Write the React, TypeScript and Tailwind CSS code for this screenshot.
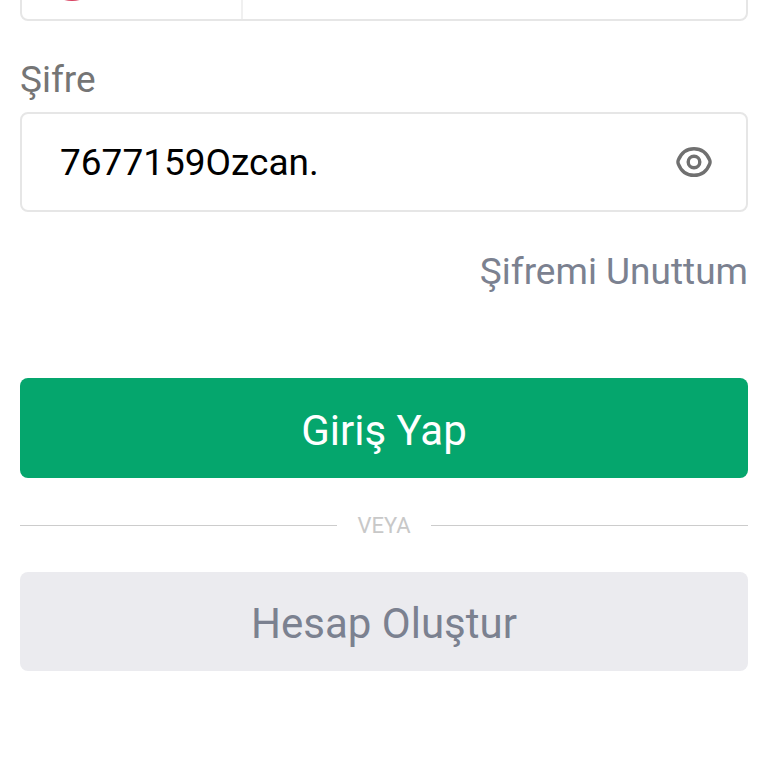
import React, { useState } from 'react';

const EyeIcon: React.FC = () => (
  <svg viewBox="0 0 36 32" className="w-9 h-8" fill="none" stroke="#707070" strokeWidth={3.4} aria-hidden="true">
    <path d="M2.300 14.200C5 7.200 10.500 2.700 18 2.700S31 7.200 33.700 14.200Q34.400 16 33.700 17.800C31 24.800 25.500 29.300 18 29.300S5 24.800 2.300 17.800Q1.600 16 2.300 14.200Z" strokeLinejoin="round" />
    <circle cx="18" cy="16" r="5.800" />
  </svg>
);

const PhoneField: React.FC = () => (
  <div className="flex h-[100px] rounded-lg border-2 border-[#e6e6e6] bg-white">
    <button type="button" aria-label="Ülke kodu" className="w-[221px] flex items-center pl-5 border-r-2 border-[#f0f0f0]">
      <svg viewBox="0 0 60 60" className="size-[60px]" aria-hidden="true">
        <circle cx="30" cy="30" r="30" fill="#d8405f" />
        <circle cx="24" cy="30" r="14" fill="#fff" />
        <circle cx="28" cy="30" r="11" fill="#d8405f" />
      </svg>
    </button>
    <input type="tel" aria-label="Telefon" className="flex-1 min-w-0 px-10 text-[37px] outline-none" />
  </div>
);

const PasswordField: React.FC = () => {
  const [password, setPassword] = useState('7677159Ozcan.');
  const [visible, setVisible] = useState(true);

  return (
    <div className="mt-[37px] flex flex-col gap-[10px]">
      <label htmlFor="password" className="text-[37px] leading-[44px] text-[#757575]">Şifre</label>
      <div className="flex items-center h-[100px] rounded-lg border-2 border-[#e6e6e6] bg-white pl-[38px] pr-[34px]">
        <input
          id="password"
          type={visible ? 'text' : 'password'}
          value={password}
          onChange={e => setPassword(e.target.value)}
          className="flex-1 min-w-0 pt-0.5 text-[37px] leading-[44px] text-black outline-none"
        />
        <button type="button" aria-label="Şifreyi göster" onClick={() => setVisible(v => !v)}>
          <EyeIcon />
        </button>
      </div>
    </div>
  );
};

export default function App() {
  return (
    <main className="min-h-screen overflow-hidden bg-white font-['Roboto',sans-serif]">
      <form className="-mt-[79px] px-5 flex flex-col" onSubmit={e => e.preventDefault()}>
        <PhoneField />
        <PasswordField />

        <a href="#" className="mt-[38px] self-end text-[37px] leading-[44px] text-[#7b8190]">Şifremi Unuttum</a>

        <button type="submit" className="mt-[84px] h-[100px] pt-1 rounded-lg bg-[#05a66d] text-[42px] text-white">
          Giriş Yap
        </button>

        <div className="my-[33px] flex items-center gap-5 text-[22px] leading-[26px] text-[#c8c8c8]">
          <span className="flex-1 h-px bg-[#cccccc]" />
          <span className="pt-0.5">VEYA</span>
          <span className="flex-1 h-px bg-[#cccccc]" />
        </div>

        <button type="button" className="h-[99px] pt-1 rounded-lg bg-[#ebebef] text-[42px] text-[#7b8190]">
          Hesap Oluştur
        </button>
      </form>
    </main>
  );
}
